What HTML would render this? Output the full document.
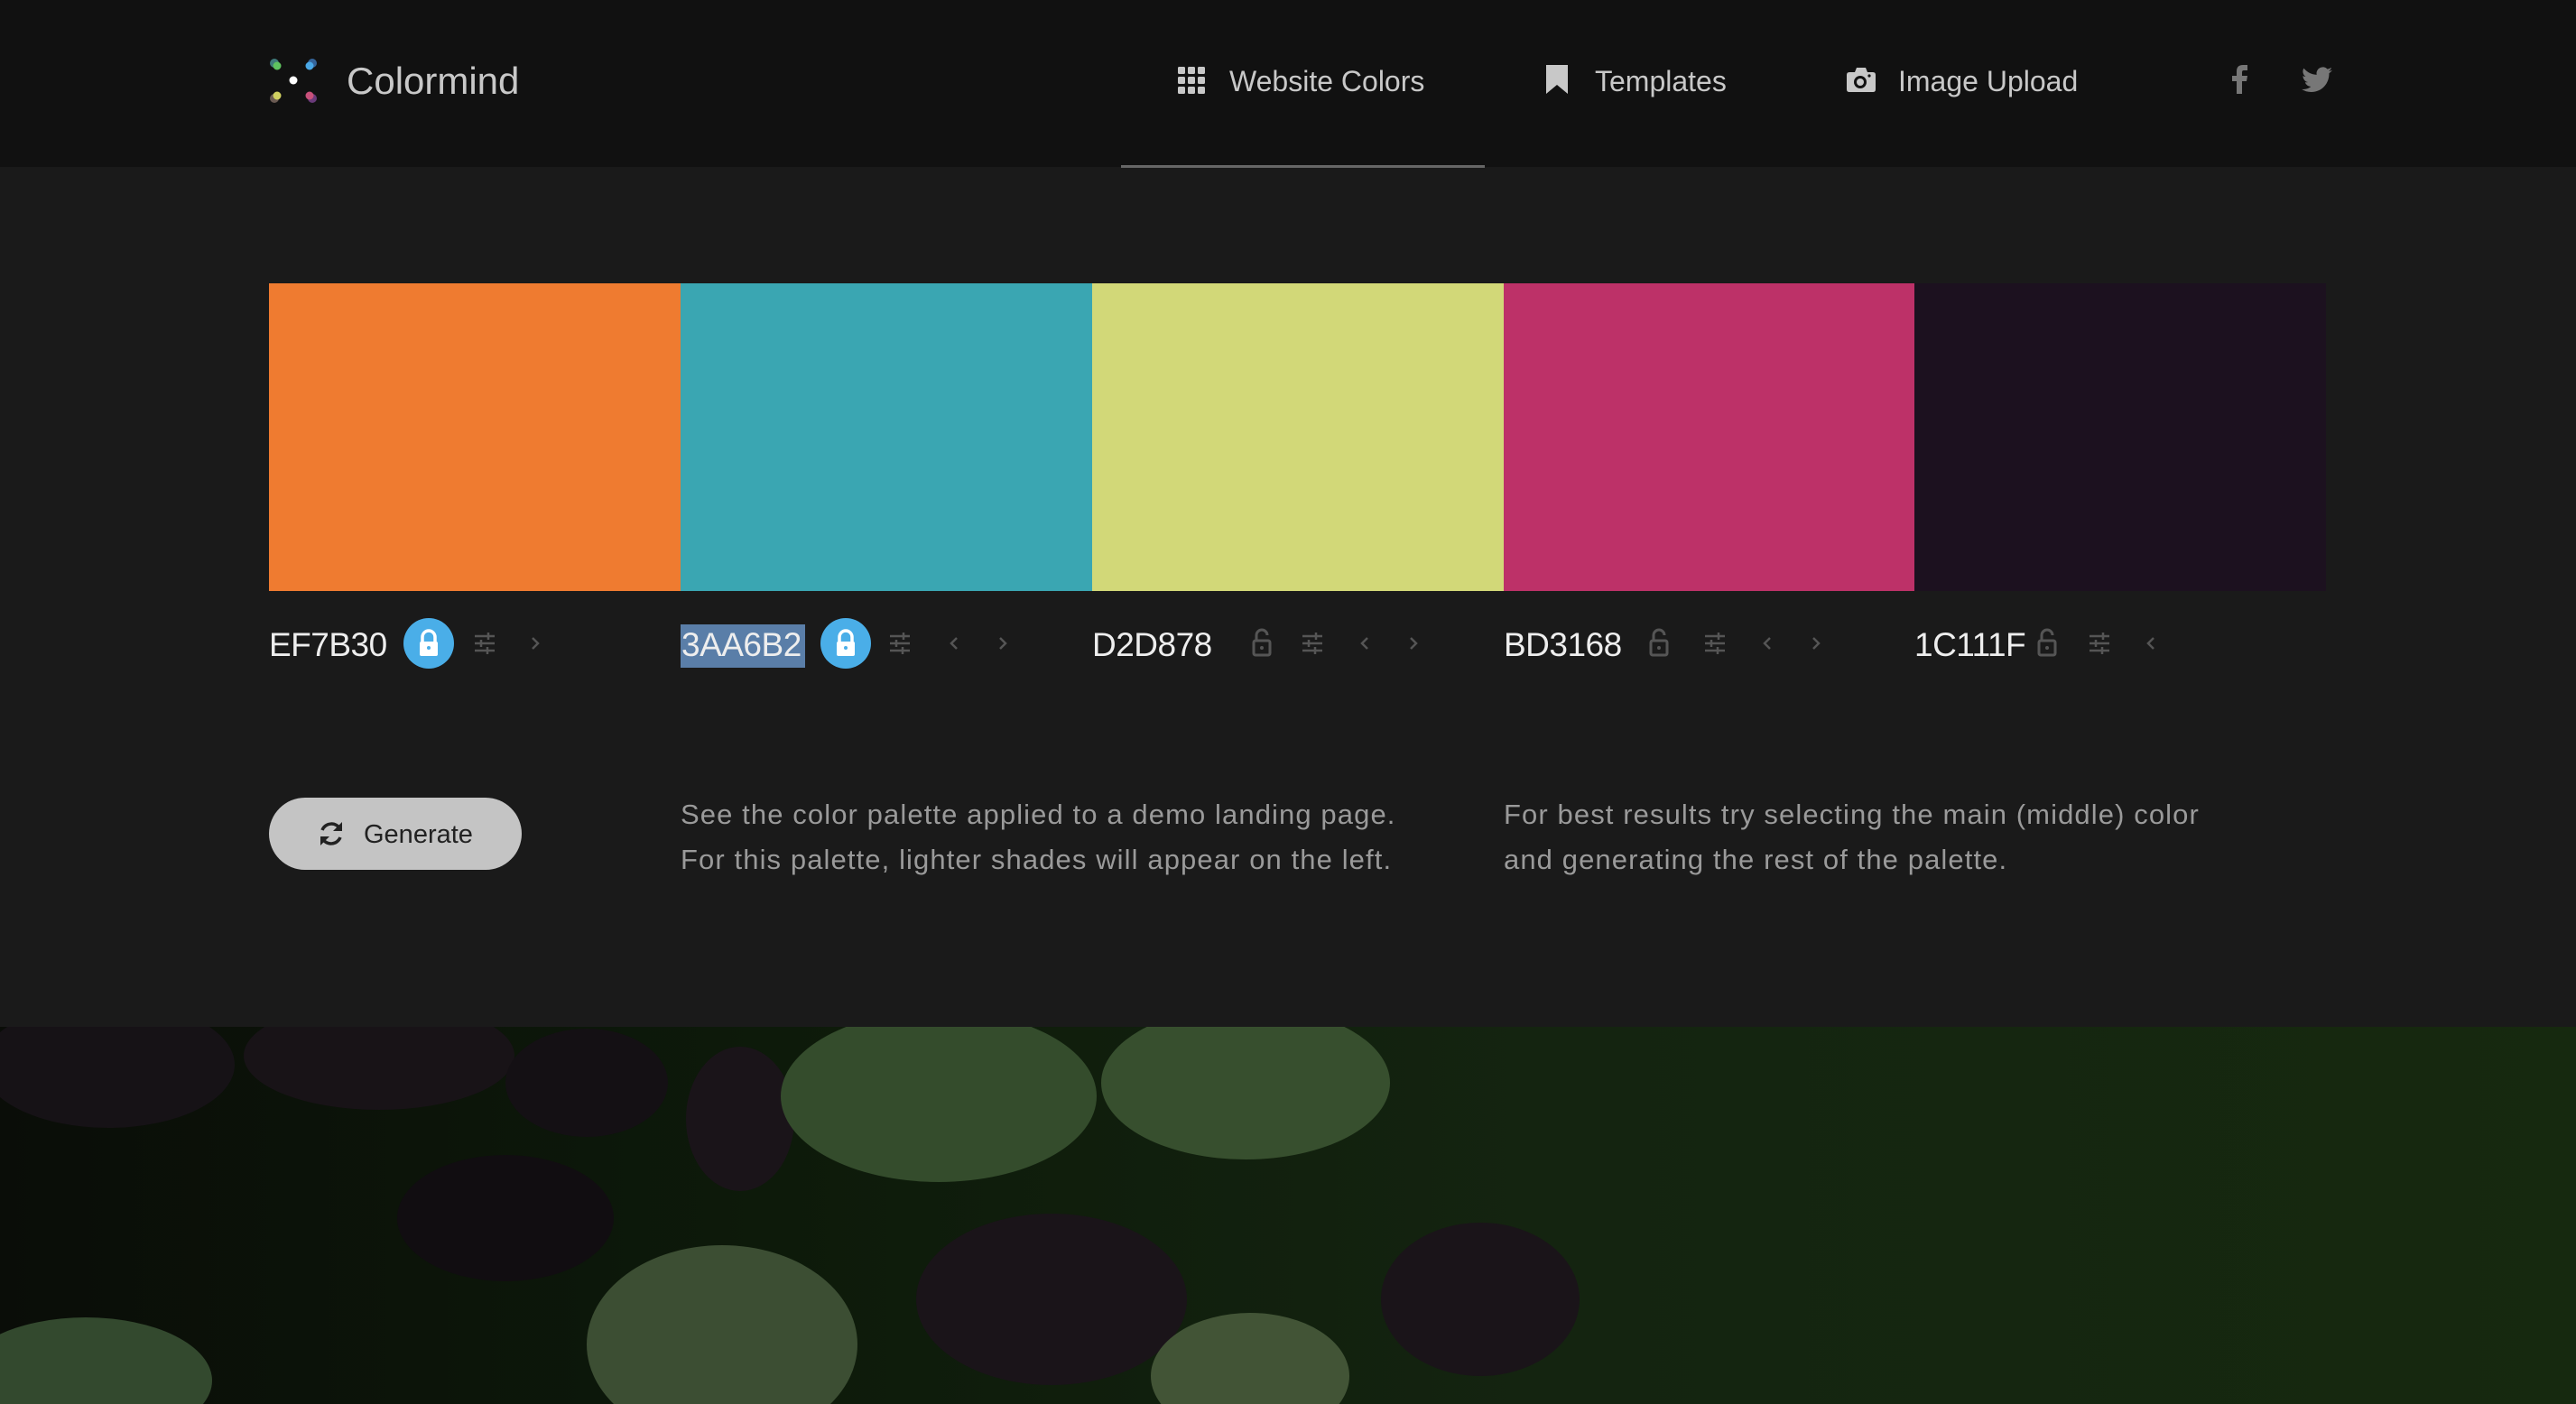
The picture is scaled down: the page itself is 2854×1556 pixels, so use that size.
<!DOCTYPE html>
<html><head><meta charset="utf-8"><style>
*{margin:0;padding:0;box-sizing:border-box}
body{width:2854px;height:1556px;background:#1a1a1a;font-family:"Liberation Sans",sans-serif;position:relative;overflow:hidden}
.abs{position:absolute}
header{position:absolute;left:0;top:0;width:2854px;height:185px;background:#111}
.nav{position:absolute;top:68px;font-size:32px;color:#c8c8c8;line-height:44px;white-space:nowrap}
.sw{position:absolute;top:314px;height:341px;width:457px}
.lbl{position:absolute;top:692px;font-size:37px;color:#eee;line-height:46px;letter-spacing:-0.5px}
.ic{position:absolute;top:685px}
.txt{position:absolute;top:878px;font-size:31px;line-height:50px;color:#9a9a9a;white-space:nowrap;letter-spacing:1.1px}
</style></head><body>
<header>
<svg class="abs" style="left:296px;top:62px" width="60" height="56" viewBox="0 0 60 56">
<circle cx="8" cy="8" r="5" fill="#3f7a7a"/><circle cx="11" cy="11" r="4.5" fill="#5fc35f"/>
<circle cx="50" cy="8" r="5" fill="#35649a"/><circle cx="47" cy="11" r="4.5" fill="#4aa8e6"/>
<circle cx="29" cy="27" r="4.5" fill="#fff"/>
<circle cx="8" cy="47" r="5" fill="#6a5a52"/><circle cx="11" cy="44" r="4.5" fill="#d0d060"/>
<circle cx="50" cy="47" r="5" fill="#6a3a7a"/><circle cx="47" cy="44" r="4.5" fill="#c8507a"/>
</svg>
<div class="abs" style="left:384px;top:64px;font-size:42px;color:#c8c8c8;line-height:52px">Colormind</div>
<svg class="abs" style="left:1305px;top:74px" width="30" height="30" viewBox="0 0 30 30" fill="#c8c8c8">
<rect x="0" y="0" width="8" height="8" rx="1.5"/><rect x="11" y="0" width="8" height="8" rx="1.5"/><rect x="22" y="0" width="8" height="8" rx="1.5"/>
<rect x="0" y="11" width="8" height="8" rx="1.5"/><rect x="11" y="11" width="8" height="8" rx="1.5"/><rect x="22" y="11" width="8" height="8" rx="1.5"/>
<rect x="0" y="22" width="8" height="8" rx="1.5"/><rect x="11" y="22" width="8" height="8" rx="1.5"/><rect x="22" y="22" width="8" height="8" rx="1.5"/></svg>
<div class="nav" style="left:1362px">Website Colors</div>
<svg class="abs" style="left:1713px;top:72px" width="24" height="32" viewBox="0 0 24 32"><path d="M0 0H24V32L12 22L0 32Z" fill="#c8c8c8"/></svg>
<div class="nav" style="left:1767px">Templates</div>
<svg class="abs" style="left:2046px;top:74px" width="32" height="28" viewBox="0 0 32 28"><path d="M3 6H9L11 1H21L23 6H29Q32 6 32 9V25Q32 28 29 28H3Q0 28 0 25V9Q0 6 3 6Z" fill="#c8c8c8"/><circle cx="15" cy="17" r="7" fill="#111"/><circle cx="15" cy="17" r="4" fill="#c8c8c8"/><circle cx="25" cy="10" r="1.6" fill="#111"/></svg>
<div class="nav" style="left:2103px">Image Upload</div>
<svg class="abs" style="left:2472px;top:72px" width="18" height="32" viewBox="0 0 18 32"><path d="M12 32V18H17L18 12H12V8Q12 6 14 6H18V0H13Q6 0 6 7V12H1V18H6V32Z" fill="#777"/></svg>
<svg class="abs" style="left:2550px;top:74px" width="34" height="29" viewBox="0 0 24 20"><path fill="#777" d="M24 2.4a10 10 0 0 1-2.8.8A5 5 0 0 0 23.3.4a10 10 0 0 1-3.1 1.2A4.9 4.9 0 0 0 11.8 6 14 14 0 0 1 1.7.9a4.9 4.9 0 0 0 1.5 6.6A5 5 0 0 1 1 6.9a4.9 4.9 0 0 0 3.9 4.9 5 5 0 0 1-2.2.1 4.9 4.9 0 0 0 4.6 3.4A9.9 9.9 0 0 1 0 17.3 14 14 0 0 0 7.5 19.5c9.1 0 14-7.5 14-14v-.6A10 10 0 0 0 24 2.4z"/></svg>
<div class="abs" style="left:1242px;top:183px;width:403px;height:3px;background:#666"></div>
</header>

<div class="sw" style="left:298px;background:#EF7B30"></div>
<div class="sw" style="left:754px;background:#3AA6B2"></div>
<div class="sw" style="left:1210px;background:#D2D878"></div>
<div class="sw" style="left:1666px;background:#BD3168"></div>
<div class="sw" style="left:2121px;width:456px;background:#1C111F"></div>

<div class="lbl" style="left:298px">EF7B30</div>
<div class="abs" style="left:754px;top:692px;width:138px;height:48px;background:#5a7ea8"></div>
<div class="lbl" style="left:755px">3AA6B2</div>
<div class="lbl" style="left:1210px">D2D878</div>
<div class="lbl" style="left:1666px">BD3168</div>
<div class="lbl" style="left:2121px">1C111F</div>

<svg width="0" height="0" style="position:absolute"><defs>
<g id="lk"><circle cx="28" cy="28" r="28" fill="#4aaee8"/><rect x="18" y="26" width="20" height="16" rx="2" fill="#fff"/><path d="M21 27V21A7 7 0 0 1 35 21V27" stroke="#fff" stroke-width="3.5" fill="none"/><circle cx="28" cy="33" r="2" fill="#4aaee8"/></g>
<g id="ul"><rect x="19" y="25" width="18" height="16" rx="2" fill="none" stroke="#555" stroke-width="3"/><path d="M22 25V19A6 6 0 0 1 34 19" stroke="#555" stroke-width="3" fill="none"/><circle cx="28" cy="33" r="2" fill="#555"/></g>
<g id="sl" stroke="#555" stroke-width="2.5"><path d="M4 20H26M4 28H26M4 36H26M19 16V24M11 24V32M18 32V40"/></g>
<g id="lt"><path d="M10 22L4 28L10 34" stroke="#555" stroke-width="2.5" fill="none"/></g>
<g id="rt"><path d="M4 22L10 28L4 34" stroke="#555" stroke-width="2.5" fill="none"/></g>
</defs></svg>

<svg class="ic" style="left:447px" width="56" height="56"><use href="#lk"/></svg>
<svg class="ic" style="left:522px" width="30" height="56"><use href="#sl"/></svg>
<svg class="ic" style="left:586px" width="14" height="56"><use href="#rt"/></svg>

<svg class="ic" style="left:909px" width="56" height="56"><use href="#lk"/></svg>
<svg class="ic" style="left:982px" width="30" height="56"><use href="#sl"/></svg>
<svg class="ic" style="left:1050px" width="14" height="56"><use href="#lt"/></svg>
<svg class="ic" style="left:1104px" width="14" height="56"><use href="#rt"/></svg>

<svg class="ic" style="left:1370px" width="56" height="56"><use href="#ul"/></svg>
<svg class="ic" style="left:1439px" width="30" height="56"><use href="#sl"/></svg>
<svg class="ic" style="left:1505px" width="14" height="56"><use href="#lt"/></svg>
<svg class="ic" style="left:1559px" width="14" height="56"><use href="#rt"/></svg>

<svg class="ic" style="left:1810px" width="56" height="56"><use href="#ul"/></svg>
<svg class="ic" style="left:1885px" width="30" height="56"><use href="#sl"/></svg>
<svg class="ic" style="left:1951px" width="14" height="56"><use href="#lt"/></svg>
<svg class="ic" style="left:2005px" width="14" height="56"><use href="#rt"/></svg>

<svg class="ic" style="left:2240px" width="56" height="56"><use href="#ul"/></svg>
<svg class="ic" style="left:2311px" width="30" height="56"><use href="#sl"/></svg>
<svg class="ic" style="left:2376px" width="14" height="56"><use href="#lt"/></svg>

<div class="abs" style="left:298px;top:884px;width:280px;height:80px;border-radius:40px;background:#c4c4c4"></div>
<svg class="abs" style="left:352px;top:908px" width="30" height="32" viewBox="0 0 30 32"><path d="M25 11A11 11 0 0 0 5 12M5 21A11 11 0 0 0 25 20" stroke="#222" stroke-width="3.5" fill="none"/><path d="M27 3V13H17Z M3 29V19H13Z" fill="#222"/></svg>
<div class="abs" style="left:403px;top:905px;font-size:29px;color:#222;line-height:40px">Generate</div>

<div class="txt" style="left:754px">See the color palette applied to a demo landing page.<br>For this palette, lighter shades will appear on the left.</div>
<div class="txt" style="left:1666px">For best results try selecting the main (middle) color<br>and generating the rest of the palette.</div>

<svg class="abs" style="left:0;top:1138px" width="2854" height="418" viewBox="0 1138 2854 418">
<defs><linearGradient id="bg" x1="0" x2="1" y1="0" y2="0"><stop offset="0" stop-color="#0a0d08"/><stop offset="0.3" stop-color="#0d1a0a"/><stop offset="0.6" stop-color="#142410"/><stop offset="1" stop-color="#16290f"/></linearGradient></defs>
<rect x="0" y="1138" width="2854" height="418" fill="url(#bg)"/>
<ellipse cx="120" cy="1180" rx="140" ry="70" fill="#161216"/>
<ellipse cx="420" cy="1170" rx="150" ry="60" fill="#181317"/>
<ellipse cx="650" cy="1200" rx="90" ry="60" fill="#141014"/>
<ellipse cx="820" cy="1240" rx="60" ry="80" fill="#1a1419"/>
<ellipse cx="1040" cy="1215" rx="175" ry="95" fill="#344c2c"/>
<ellipse cx="1380" cy="1200" rx="160" ry="85" fill="#374f2e"/>
<ellipse cx="560" cy="1350" rx="120" ry="70" fill="#110d11"/>
<ellipse cx="800" cy="1490" rx="150" ry="110" fill="#3c4e33"/>
<ellipse cx="1165" cy="1440" rx="150" ry="95" fill="#1a1419"/>
<ellipse cx="1385" cy="1525" rx="110" ry="70" fill="#425436"/>
<ellipse cx="1640" cy="1440" rx="110" ry="85" fill="#1a1419"/>
<ellipse cx="95" cy="1530" rx="140" ry="70" fill="#33492e"/>
</svg>
</body></html>
